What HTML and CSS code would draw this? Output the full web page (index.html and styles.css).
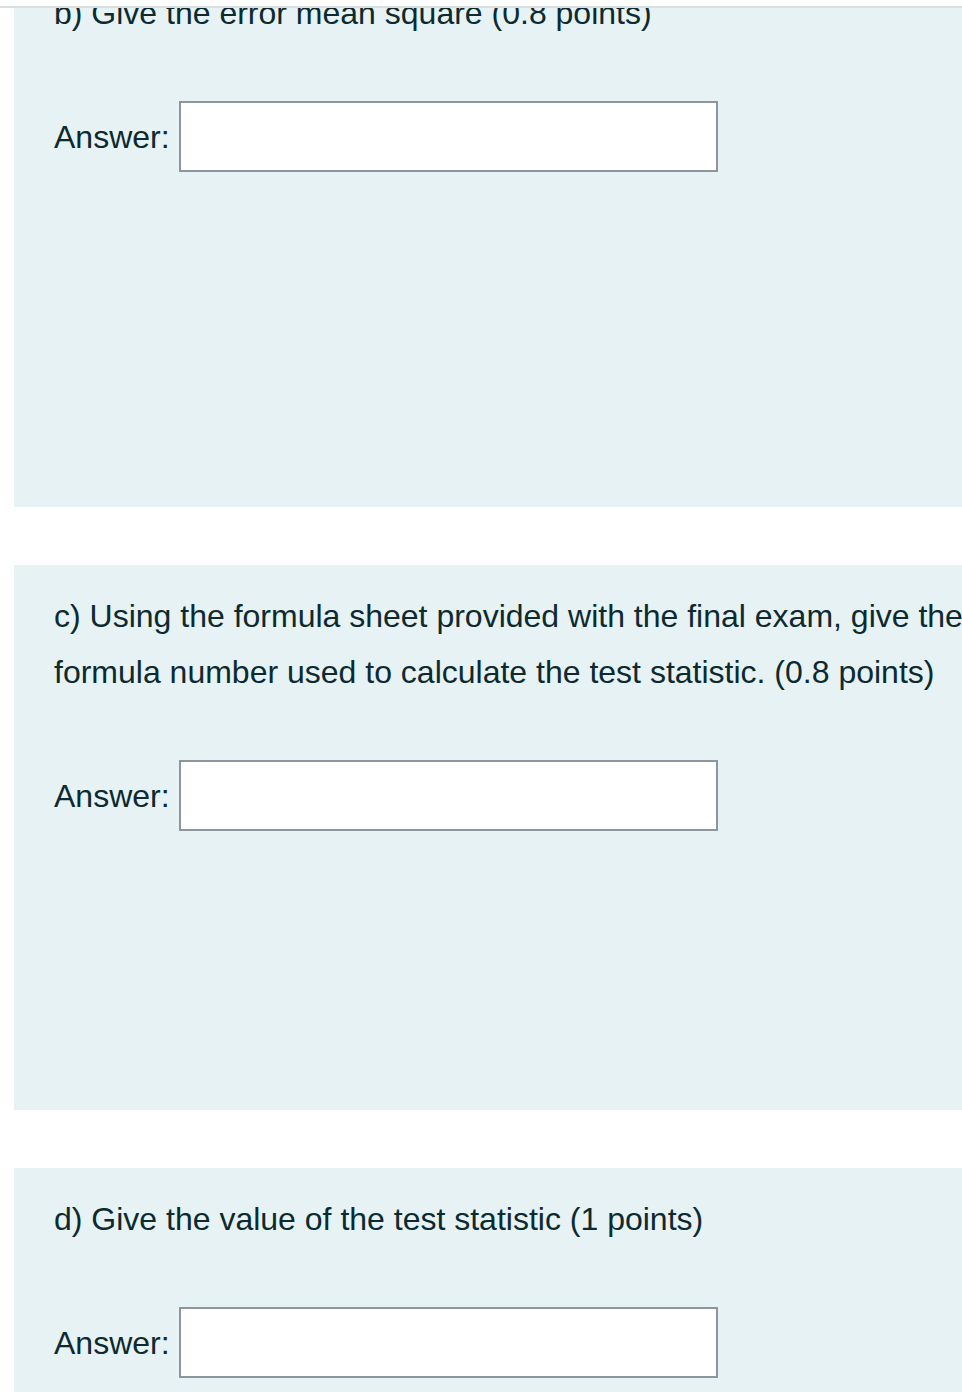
FILE: index.html
```html
<!DOCTYPE html>
<html lang="en">
<head>
<meta charset="utf-8">
<title>Quiz</title>
<link rel="stylesheet" href="styles.css">
</head>
<body>
<div class="topbar"></div>
<main class="questions">
  <section class="panel">
    <p class="prompt">b) Give the error mean square (0.8 points)</p>
    <div class="answer-row">
      <label class="answer-label">Answer:</label>
      <input class="answer-input" type="text">
    </div>
  </section>
  <section class="panel">
    <p class="prompt">c) Using the formula sheet provided with the final exam, give the formula number used to calculate the test statistic. (0.8 points)</p>
    <div class="answer-row">
      <label class="answer-label">Answer:</label>
      <input class="answer-input" type="text">
    </div>
  </section>
  <section class="panel">
    <p class="prompt">d) Give the value of the test statistic (1 points)</p>
    <div class="answer-row">
      <label class="answer-label">Answer:</label>
      <input class="answer-input" type="text">
    </div>
  </section>
</main>
</body>
</html>
```

FILE: styles.css
```css
html, body {
  margin: 0;
  padding: 0;
  background: #ffffff;
  overflow: hidden;
}

body {
  font-family: "Liberation Sans", Arial, Helvetica, sans-serif;
  color: #0c2a2f;
  width: 962px;
  height: 1392px;
}

.topbar {
  position: fixed;
  top: 0;
  left: 0;
  right: 0;
  height: 6px;
  background: #ffffff;
  border-bottom: 2px solid #dcdfe0;
  z-index: 10;
}

.questions {
  display: flex;
  flex-direction: column;
  gap: 58px;
  margin-top: -38px;
  margin-left: 14px;
}

.panel {
  box-sizing: border-box;
  width: 1040px;
  min-height: 545px;
  padding: 23px 40px 40px 40px;
  background: #e7f2f4;
}

.prompt {
  margin: 0;
  font-size: 32px;
  line-height: 56px;
}

.answer-row {
  display: flex;
  align-items: center;
  gap: 9px;
  margin-top: 60px;
}

.answer-label {
  font-size: 32px;
  line-height: 40px;
}

.answer-input {
  box-sizing: border-box;
  width: 539px;
  height: 71px;
  margin: 0;
  padding: 0 8px;
  border: 2px solid #8e959e;
  border-radius: 0;
  background: #ffffff;
  font-family: inherit;
  font-size: 28px;
  outline: none;
}
```
